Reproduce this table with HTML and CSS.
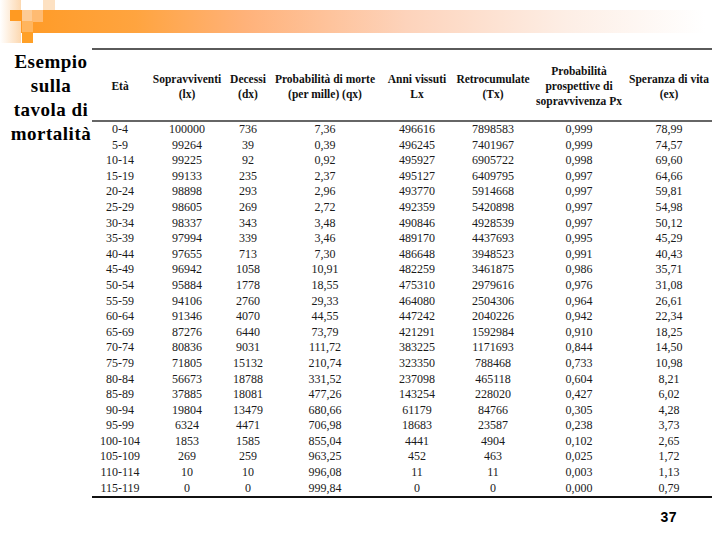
FILE: index.html
```html
<!DOCTYPE html>
<html lang="it">
<head>
<meta charset="utf-8">
<title>Esempio sulla tavola di mortalità</title>
<link rel="stylesheet" href="styles.css">
</head>
<body>
<div class="slide">
  <header class="topbar">
    <div class="bar"></div>
    <svg class="squares" width="60" height="45" viewBox="0 0 60 45">
      <defs>
        <linearGradient id="fade" x1="0" y1="0" x2="1" y2="0">
          <stop offset="0" stop-color="#ffffff"/>
          <stop offset="1" stop-color="#fcd8b0"/>
        </linearGradient>
      </defs>
      <rect x="0" y="0" width="21" height="43" fill="url(#fade)"/>
      <rect x="10" y="10" width="12" height="11" fill="#ff9a22"/>
      <rect x="22" y="10" width="10" height="11" fill="#fdcb95"/>
      <rect x="32" y="10" width="11" height="12" fill="#ffbb72"/>
      <rect x="43" y="0" width="12" height="10" fill="#fde1c2"/>
      <rect x="22" y="21" width="11" height="11" fill="#ffb55e"/>
      <rect x="22" y="32" width="11" height="11" fill="#ffa027"/>
    </svg>
  </header>
  <main class="content">
    <h1 class="title">Esempio sulla tavola di mortalità</h1>
    <table class="life">
      <colgroup>
        <col class="c1"><col class="c2"><col class="c3"><col class="c4"><col class="c5"><col class="c6"><col class="c7"><col class="c8">
      </colgroup>
      <thead>
        <tr>
          <th>Età</th>
          <th>Sopravviventi<br>(lx)</th>
          <th>Decessi<br>(dx)</th>
          <th>Probabilità di morte<br>(per mille) (qx)</th>
          <th>Anni vissuti<br>Lx</th>
          <th>Retrocumulate<br>(Tx)</th>
          <th>Probabilità<br>prospettive di<br>sopravvivenza Px</th>
          <th>Speranza di vita<br>(ex)</th>
        </tr>
      </thead>
      <tbody>
        <tr><td>0-4</td><td>100000</td><td>736</td><td>7,36</td><td>496616</td><td>7898583</td><td>0,999</td><td>78,99</td></tr>
        <tr><td>5-9</td><td>99264</td><td>39</td><td>0,39</td><td>496245</td><td>7401967</td><td>0,999</td><td>74,57</td></tr>
        <tr><td>10-14</td><td>99225</td><td>92</td><td>0,92</td><td>495927</td><td>6905722</td><td>0,998</td><td>69,60</td></tr>
        <tr><td>15-19</td><td>99133</td><td>235</td><td>2,37</td><td>495127</td><td>6409795</td><td>0,997</td><td>64,66</td></tr>
        <tr><td>20-24</td><td>98898</td><td>293</td><td>2,96</td><td>493770</td><td>5914668</td><td>0,997</td><td>59,81</td></tr>
        <tr><td>25-29</td><td>98605</td><td>269</td><td>2,72</td><td>492359</td><td>5420898</td><td>0,997</td><td>54,98</td></tr>
        <tr><td>30-34</td><td>98337</td><td>343</td><td>3,48</td><td>490846</td><td>4928539</td><td>0,997</td><td>50,12</td></tr>
        <tr><td>35-39</td><td>97994</td><td>339</td><td>3,46</td><td>489170</td><td>4437693</td><td>0,995</td><td>45,29</td></tr>
        <tr><td>40-44</td><td>97655</td><td>713</td><td>7,30</td><td>486648</td><td>3948523</td><td>0,991</td><td>40,43</td></tr>
        <tr><td>45-49</td><td>96942</td><td>1058</td><td>10,91</td><td>482259</td><td>3461875</td><td>0,986</td><td>35,71</td></tr>
        <tr><td>50-54</td><td>95884</td><td>1778</td><td>18,55</td><td>475310</td><td>2979616</td><td>0,976</td><td>31,08</td></tr>
        <tr><td>55-59</td><td>94106</td><td>2760</td><td>29,33</td><td>464080</td><td>2504306</td><td>0,964</td><td>26,61</td></tr>
        <tr><td>60-64</td><td>91346</td><td>4070</td><td>44,55</td><td>447242</td><td>2040226</td><td>0,942</td><td>22,34</td></tr>
        <tr><td>65-69</td><td>87276</td><td>6440</td><td>73,79</td><td>421291</td><td>1592984</td><td>0,910</td><td>18,25</td></tr>
        <tr><td>70-74</td><td>80836</td><td>9031</td><td>111,72</td><td>383225</td><td>1171693</td><td>0,844</td><td>14,50</td></tr>
        <tr><td>75-79</td><td>71805</td><td>15132</td><td>210,74</td><td>323350</td><td>788468</td><td>0,733</td><td>10,98</td></tr>
        <tr><td>80-84</td><td>56673</td><td>18788</td><td>331,52</td><td>237098</td><td>465118</td><td>0,604</td><td>8,21</td></tr>
        <tr><td>85-89</td><td>37885</td><td>18081</td><td>477,26</td><td>143254</td><td>228020</td><td>0,427</td><td>6,02</td></tr>
        <tr><td>90-94</td><td>19804</td><td>13479</td><td>680,66</td><td>61179</td><td>84766</td><td>0,305</td><td>4,28</td></tr>
        <tr><td>95-99</td><td>6324</td><td>4471</td><td>706,98</td><td>18683</td><td>23587</td><td>0,238</td><td>3,73</td></tr>
        <tr><td>100-104</td><td>1853</td><td>1585</td><td>855,04</td><td>4441</td><td>4904</td><td>0,102</td><td>2,65</td></tr>
        <tr><td>105-109</td><td>269</td><td>259</td><td>963,25</td><td>452</td><td>463</td><td>0,025</td><td>1,72</td></tr>
        <tr><td>110-114</td><td>10</td><td>10</td><td>996,08</td><td>11</td><td>11</td><td>0,003</td><td>1,13</td></tr>
        <tr><td>115-119</td><td>0</td><td>0</td><td>999,84</td><td>0</td><td>0</td><td>0,000</td><td>0,79</td></tr>
      </tbody>
    </table>
  </main>
  <footer class="footer">
    <span class="pagenum">37</span>
  </footer>
</div>
</body>
</html>
```

FILE: styles.css
```css
html, body {
  margin: 0;
  padding: 0;
  background: #ffffff;
}

.slide {
  width: 720px;
  height: 540px;
  overflow: hidden;
  font-family: "Liberation Serif", "Times New Roman", serif;
  color: #111111;
}

.topbar {
  position: relative;
  height: 48px;
}

.bar {
  margin-left: 10px;
  padding-top: 0;
  position: relative;
  top: 10px;
  width: 695px;
  height: 23px;
  background: linear-gradient(to right,
    #ff9a24 0%,
    #ffa43f 18%,
    #ffb27a 34%,
    #fdd3bb 57%,
    #fdeee5 80%,
    #ffffff 100%);
}

.squares {
  position: absolute;
  left: 0;
  top: 0;
}

.content {
  display: flex;
  align-items: flex-start;
}

.title {
  width: 82px;
  margin: 0;
  padding: 2px 0 0 10px;
  font-size: 19px;
  line-height: 24px;
  font-weight: bold;
  letter-spacing: 0.5px;
  text-align: center;
  color: #000000;
}

.life {
  width: 620px;
  border-collapse: collapse;
  table-layout: fixed;
  border-top: 2px solid #5a5a5a;
  border-bottom: 2px solid #111111;
}

.c1 { width: 56px; }
.c2 { width: 78px; }
.c3 { width: 44px; }
.c4 { width: 110px; }
.c5 { width: 74px; }
.c6 { width: 78px; }
.c7 { width: 94px; }
.c8 { width: 86px; }

.life th {
  height: 72px;
  padding: 3px 0 0 0;
  box-sizing: border-box;
  font-size: 11.5px;
  line-height: 15px;
  font-weight: bold;
  text-align: center;
  vertical-align: middle;
  white-space: nowrap;
  border-bottom: 2px solid #666666;
  color: #111111;
}

.life td {
  height: 15.6px;
  padding: 0;
  font-size: 12px;
  line-height: 15.6px;
  text-align: center;
  white-space: nowrap;
  color: #1a1a1a;
}

.footer {
  display: flex;
  justify-content: flex-end;
  padding: 12px 43px 0 0;
}

.pagenum {
  font-family: "Liberation Sans", Arial, sans-serif;
  font-weight: 900;
  font-size: 14px;
  line-height: 14px;
  letter-spacing: 0.5px;
  color: #000000;
}
```
